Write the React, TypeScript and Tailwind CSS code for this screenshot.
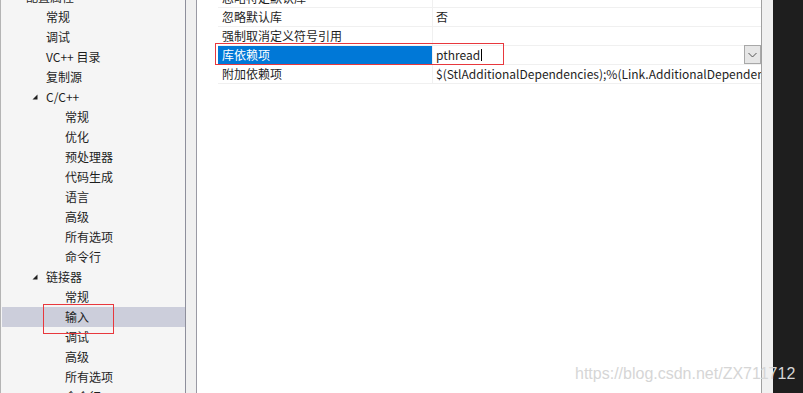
import React from 'react';

type TreeItem = { label: string; level: number; expanded?: boolean; selected?: boolean };

const treeItems: TreeItem[] = [
  { label: '配置属性', level: 0 },
  { label: '常规', level: 1 },
  { label: '调试', level: 1 },
  { label: 'VC++ 目录', level: 1 },
  { label: '复制源', level: 1 },
  { label: 'C/C++', level: 1, expanded: true },
  { label: '常规', level: 2 },
  { label: '优化', level: 2 },
  { label: '预处理器', level: 2 },
  { label: '代码生成', level: 2 },
  { label: '语言', level: 2 },
  { label: '高级', level: 2 },
  { label: '所有选项', level: 2 },
  { label: '命令行', level: 2 },
  { label: '链接器', level: 1, expanded: true },
  { label: '常规', level: 2 },
  { label: '输入', level: 2, selected: true },
  { label: '调试', level: 2 },
  { label: '高级', level: 2 },
  { label: '所有选项', level: 2 },
  { label: '命令行', level: 2 },
];

const indent = ['pl-[25px]', 'pl-[45px]', 'pl-[64px]'];

const props = [
  { name: '忽略特定默认库', value: '' },
  { name: '忽略默认库', value: '否' },
  { name: '强制取消定义符号引用', value: '' },
  { name: '库依赖项', value: 'pthread', editing: true },
  { name: '附加依赖项', value: '$(StlAdditionalDependencies);%(Link.AdditionalDependencies)' },
];

const font = { fontFamily: '"Noto Sans CJK SC", "Microsoft YaHei", sans-serif' };

function Expander() {
  return (
    <svg width="6" height="6" viewBox="0 0 6 6" className="absolute left-[30px] top-[7px]">
      <polygon points="5.5,0.5 5.5,5.5 0.5,5.5" fill="#1e1e1e" />
    </svg>
  );
}

export default function App() {
  return (
    <div className="relative flex h-[393px] w-[803px] overflow-hidden bg-white text-[12px] text-[#1e1e1e]" style={font}>
      {/* tree */}
      <div className="w-[186px] shrink-0 overflow-hidden border-l border-r border-l-[#b4b4b4] border-r-[#8e8f9c] bg-[#f5f5f5]">
        <div className="-mt-[13px] pl-px">
          {treeItems.map((it, i) => (
            <div
              key={i}
              className={`relative flex h-[20px] items-center whitespace-nowrap ${indent[it.level]} ${
                it.selected ? 'bg-[#cccedb]' : ''
              }`}
            >
              {it.expanded && <Expander />}
              <span className="-ml-px">{it.label}</span>
            </div>
          ))}
        </div>
      </div>

      {/* splitter */}
      <div className="w-[11px] shrink-0 border-r border-[#9a9aa4] bg-[#f0f0f0]" />

      {/* property grid */}
      <div className="w-[565px] shrink-0 overflow-hidden border-r border-[#a0a0a0] bg-white pl-[21px]">
        <div className="-mt-[11px]">
          {props.map((p, i) => (
            <div key={i} className="flex h-[19px] border-b border-[#f0f0f0]">
              <div
                className={`flex w-[214px] shrink-0 items-center whitespace-nowrap pl-[4px] ${
                  p.editing ? 'bg-[#0078d7] text-white' : ''
                }`}
              >
                {p.name}
              </div>
              <div className="flex min-w-0 flex-1 items-center border-l border-[#f0f0f0] pl-[3px]">
                <span className="overflow-hidden whitespace-nowrap">{p.value}</span>
                {p.editing && (
                  <>
                    <span className="ml-px h-[12px] w-px bg-black" />
                    <div className="ml-auto flex h-[19px] w-[17px] shrink-0 -mt-px items-center justify-center border border-[#a8a8a8] bg-[#e6e6e6]">
                      <svg width="9" height="6" viewBox="0 0 9 6">
                        <polyline points="0.5,1 4.5,5 8.5,1" fill="none" stroke="#555" strokeWidth="1" />
                      </svg>
                    </div>
                  </>
                )}
              </div>
            </div>
          ))}
        </div>
      </div>

      {/* scrollbar strip */}
      <div className="w-[11px] shrink-0 bg-[#f0f0f0]" />
      <div className="flex-1 bg-[#1e1e1e]" />

      {/* annotations */}
      <div className="pointer-events-none absolute left-[215px] top-[43px] h-[22px] w-[289px] border border-[#e8383d]" />
      <div className="pointer-events-none absolute left-[43px] top-[304px] h-[30px] w-[71px] border border-[#e8383d]" />

      {/* watermark */}
      <div
        className="pointer-events-none absolute left-[575px] top-[366px] text-[16px] leading-none text-[#d6d6d6]"
        style={{ fontFamily: '"Liberation Sans", Arial, sans-serif' }}
      >
        https://blog.csdn.net/ZX711712
      </div>
    </div>
  );
}
